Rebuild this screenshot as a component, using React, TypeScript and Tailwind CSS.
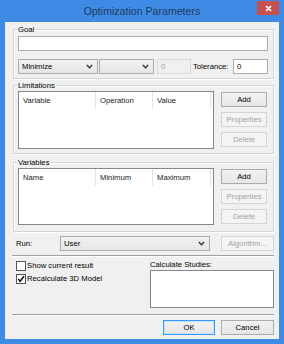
import type { ReactNode } from 'react';

const ui = "font-['Liberation_Sans',Arial,sans-serif]";

const Chevron = () => (
  <svg width="7" height="5" viewBox="0 0 7 5" className="shrink-0">
    <polyline points="0.8,1 3.5,3.8 6.2,1" fill="none" stroke="#333" strokeWidth="1.3" />
  </svg>
);

const Dropdown = ({ value, className }: { value?: string; className: string }) => (
  <div
    className={`flex h-[15px] items-center justify-between border border-[#acacac] bg-[linear-gradient(#f2f2f2,#e6e6e6)] pl-[3px] pr-[4px] ${className}`}
  >
    <span className="leading-[13px] text-black">{value}</span>
    <Chevron />
  </div>
);

const Button = ({
  label,
  className,
  disabled = false,
  primary = false,
}: {
  label: string;
  className: string;
  disabled?: boolean;
  primary?: boolean;
}) => (
  <div
    className={`flex h-[15px] items-center justify-center border leading-[13px] ${
      disabled
        ? 'border-[#d5d5d5] bg-[#f4f4f4] text-[#a3a3a3]'
        : primary
          ? 'border-[#3399ff] bg-[linear-gradient(#f2f2f2,#e6e6e6)] text-black shadow-[inset_0_0_0_1px_#c7e4fc]'
          : 'border-[#acacac] bg-[linear-gradient(#f2f2f2,#e6e6e6)] text-black'
    } ${className}`}
  >
    {label}
  </div>
);

const Group = ({
  label,
  className,
  children,
}: {
  label: string;
  className: string;
  children: ReactNode;
}) => (
  <div
    className={`relative border border-[#d5d5d5] shadow-[inset_1px_1px_0_#fff,1px_1px_0_#fff] ${className}`}
  >
    <span className="absolute left-[3px] top-[-5px] bg-[#f0f0f0] px-[1px] leading-[9px] text-black">
      {label}
    </span>
    {children}
  </div>
);

const ListView = ({ columns, className }: { columns: string[]; className: string }) => (
  <div className={`border border-[#828790] bg-white ${className}`}>
    <div className="flex h-[17px] items-center">
      <div className="flex h-full w-[77px] items-center border-r border-[#e5e5e5] pl-[4px] text-[#222]">
        {columns[0]}
      </div>
      <div className="flex h-full w-[57px] items-center border-r border-[#e5e5e5] pl-[4px] text-[#222]">
        {columns[1]}
      </div>
      <div className="flex h-full w-[58px] items-center border-r border-[#e5e5e5] pl-[4px] text-[#222]">
        {columns[2]}
      </div>
    </div>
  </div>
);

const SideButtons = () => (
  <div className="ml-[7px] mt-[1px] flex flex-col gap-[5px]">
    <Button label="Add" className="w-[46px]" />
    <Button label="Properties" className="w-[46px]" disabled />
    <Button label="Delete" className="w-[46px]" disabled />
  </div>
);

const Checkbox = ({ checked, label }: { checked?: boolean; label: string }) => (
  <div className="flex h-[10px] items-center gap-[1px]">
    <div className="flex h-[10px] w-[10px] items-center justify-center border border-[#555] bg-white">
      {checked && (
        <svg width="8" height="8" viewBox="0 0 8 8">
          <polyline points="1.2,4 3.2,6.3 7,1.3" fill="none" stroke="#111" strokeWidth="1.5" />
        </svg>
      )}
    </div>
    <span className="leading-[10px] text-black">{label}</span>
  </div>
);

const Separator = () => (
  <div className="-ml-[1px] h-[2px] w-[262px] border-t border-b border-t-[#a0a0a0] border-b-white" />
);

export default function App() {
  return (
    <div className={`h-[344px] w-[284px] bg-[#3d8be5] ${ui} text-[7.7px]`}>
      <div className="relative flex h-[22px] items-center justify-center">
        <span className="text-[10.6px] leading-[12px] text-[#233a5c]">Optimization Parameters</span>
        <div className="absolute right-[5px] top-[1px] flex h-[14px] w-[22px] items-center justify-center bg-[#c75050]">
          <svg width="7" height="7" viewBox="0 0 7 7">
            <path d="M1 1L6 6M6 1L1 6" stroke="#fff" strokeWidth="1.7" />
          </svg>
        </div>
      </div>

      <div className="mx-[5px] flex h-[317px] flex-col bg-[#f0f0f0] pl-[8px] pr-[5px] pt-[7px]">
        <Group label="Goal" className="h-[50px] w-[261px] pl-[4px] pt-[6px]">
          <div className="h-[15px] w-[250px] border border-[#abadb3] bg-white" />
          <div className="mt-[8px] flex h-[15px] items-center">
            <Dropdown value="Minimize" className="w-[80px]" />
            <Dropdown className="ml-[1px] w-[55px]" />
            <div className="ml-[3px] flex h-[15px] w-[34px] items-center border border-[#d9d9d9] bg-[#f0f0f0] pl-[3px] leading-[13px] text-[#a3a3a3]">
              0
            </div>
            <span className="ml-[2px] w-[40px] leading-[13px] text-black">Tolerance:</span>
            <div className="flex h-[15px] w-[35px] items-center border border-[#abadb3] bg-white pl-[3px] leading-[13px] text-black">
              0
            </div>
          </div>
        </Group>

        <Group label="Limitations" className="mt-[6px] flex h-[69px] w-[261px] pl-[4px] pt-[5px]">
          <ListView columns={['Variable', 'Operation', 'Value']} className="h-[58px] w-[196px]" />
          <SideButtons />
        </Group>

        <Group label="Variables" className="mt-[8px] flex h-[70px] w-[261px] pl-[4px] pt-[5px]">
          <ListView columns={['Name', 'Minimum', 'Maximum']} className="h-[57px] w-[196px]" />
          <SideButtons />
        </Group>

        <div className="ml-[3px] mt-[4px] flex h-[15px] items-center">
          <span className="w-[44px] leading-[13px] text-black">Run:</span>
          <Dropdown value="User" className="w-[150px]" />
          <Button label="Algorithm..." className="ml-[11px] w-[53px]" disabled />
        </div>

        <div className="mt-[4px]">
          <Separator />
        </div>

        <div className="flex">
          <div className="ml-[3px] mt-[4px] flex w-[134px] flex-col gap-[3px]">
            <Checkbox label="Show current result" />
            <Checkbox checked label="Recalculate 3D Model" />
          </div>
          <div className="mt-[3px] flex flex-col">
            <span className="h-[9px] leading-[9px] text-black">Calculate Studies:</span>
            <div className="mt-[1px] h-[38px] w-[124px] border border-[#828790] bg-white" />
          </div>
        </div>

        <div className="mt-[6px]">
          <Separator />
        </div>

        <div className="mt-[4px] flex justify-end gap-[6px]">
          <Button label="OK" className="w-[52px]" primary />
          <Button label="Cancel" className="w-[53px]" />
        </div>
      </div>
    </div>
  );
}
